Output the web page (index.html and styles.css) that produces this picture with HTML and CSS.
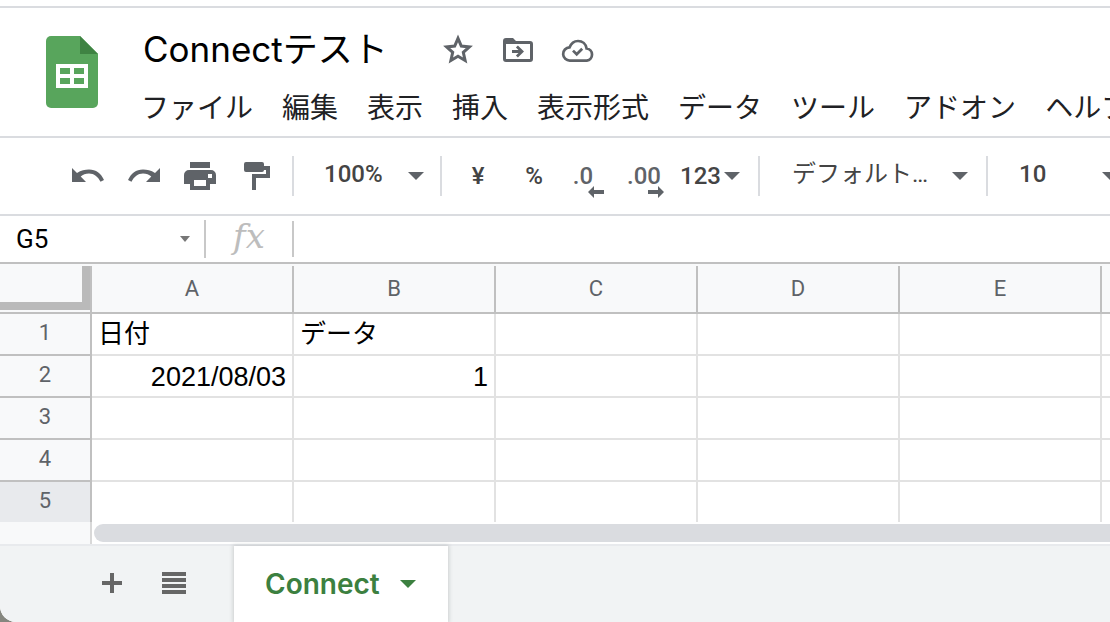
FILE: index.html
```html
<!DOCTYPE html>
<html lang="ja">
<head>
<meta charset="utf-8">
<meta name="viewport" content="width=device-width, initial-scale=1">
<title>Connectテスト</title>
<link rel="stylesheet" href="styles.css">
</head>
<body>
<div class="app">
  <header class="header">
    <svg class="logo" viewBox="0 0 52 72" aria-hidden="true">
      <path fill="#58a55c" d="M5 0h29l18 18v49a5 5 0 0 1-5 5H5a5 5 0 0 1-5-5V5a5 5 0 0 1 5-5z"/>
      <path fill="#3f8343" d="M34 0l18 18H34z"/>
      <path fill="#fff" fill-rule="evenodd" d="M10 28h32v24H10zM14 32v6h10v-6zM28 32v6h10v-6zM14 42v6h10v-6zM28 42v6h10v-6z"/>
    </svg>
    <div class="heading">
      <div class="title-row">
        <h1 class="title">Connectテスト</h1>
        <div class="title-actions">
          <button class="title-button" aria-label="スターを付ける">
            <svg width="36" height="36" viewBox="0 0 36 36"><path fill="none" stroke="#5f6368" stroke-width="3" d="M18 6.300l3.300 7.800 8.100.8-6.100 5.500 1.800 8.100-7.100-4.300-7.100 4.300 1.800-8.100-6.100-5.500 8.100-.8z"/></svg>
          </button>
          <button class="title-button" aria-label="移動">
            <svg width="36" height="36" viewBox="0 0 36 36"><path fill="#5f6368" fill-rule="evenodd" d="M6 6h7l3 3h14a3 3 0 0 1 3 3v15a3 3 0 0 1-3 3H6a3 3 0 0 1-3-3V9a3 3 0 0 1 3-3zM6 12v15h24V12z"/><path fill="#5f6368" d="M12 18h6.500l-2.600-2.600 2-2 6.100 6.100-6.100 6.100-2-2 2.600-2.600H12z"/></svg>
          </button>
          <button class="title-button" aria-label="保存状況">
            <svg width="36" height="36" viewBox="0 0 36 36" fill="none" stroke="#5f6368" stroke-width="2.700"><path d="M10 28.600a6.600 6.600 0 0 1-.5-13.200C11 11.700 14 9 18 9c4.500 0 7.800 3 8.600 7.500a6.100 6.100 0 0 1 .2 12.100z"/><path d="M13 18.600l3.700 3.700 5.500-5.500"/></svg>
          </button>
        </div>
      </div>
      <nav class="menubar">
        <button class="menu">ファイル</button>
        <button class="menu">編集</button>
        <button class="menu">表示</button>
        <button class="menu">挿入</button>
        <button class="menu">表示形式</button>
        <button class="menu">データ</button>
        <button class="menu">ツール</button>
        <button class="menu">アドオン</button>
        <button class="menu">ヘルプ</button>
      </nav>
    </div>
  </header>

  <div class="toolbar" role="toolbar">
    <div class="tool-group history">
      <button class="tool" aria-label="元に戻す">
        <svg width="32" height="32" viewBox="0 0 32 32"><path fill="#5f6368" d="M0 8l5 5C9 10 13 9.500 17 9.500c7 0 12 4 15 10.500l-3.500 1.800C26 16.500 22 13.400 17 13.400c-3.500 0-6 .8-8.300 3.200L14 22H0z"/></svg>
      </button>
      <button class="tool" aria-label="やり直し">
        <svg width="32" height="32" viewBox="0 0 32 32"><path fill="#5f6368" d="M32 8l-5 5C23 10 19 9.500 15 9.500 8 9.500 3 13.500 0 20l3.500 1.800C6 16.500 10 13.400 15 13.400c3.500 0 6 .8 8.300 3.200L18 22h14z"/></svg>
      </button>
      <button class="tool" aria-label="印刷">
        <svg width="32" height="32" viewBox="0 0 32 32"><path fill="#5f6368" fill-rule="evenodd" d="M6 2h20v6H6zM5 10h22a5 5 0 0 1 5 5v9h-6v6H6v-6H0v-9a5 5 0 0 1 5-5zM10 20v6h12v-6zM24 14v4h4v-4z"/></svg>
      </button>
      <button class="tool" aria-label="書式を貼り付け">
        <svg width="32" height="32" viewBox="0 0 32 32"><path fill="#5f6368" d="M6 2h16a2 2 0 0 1 2 2v2h6v12H16v12h-4V14h14v-4h-2a2 2 0 0 1-2 2H6a2 2 0 0 1-2-2V4a2 2 0 0 1 2-2z"/></svg>
      </button>
    </div>
    <div class="tool-group picker zoom">
      <select aria-label="ズーム"><option>100%</option></select>
      <span class="arrow"></span>
    </div>
    <div class="tool-group formats">
      <button class="tool">¥</button>
      <button class="tool">%</button>
      <button class="tool decimal">.0
        <svg class="shift" width="16" height="12" viewBox="0 0 16 12"><path fill="#5f6368" d="M6 0v4h10v4H6v4L0 6z"/></svg>
      </button>
      <button class="tool decimal">.00
        <svg class="shift" width="16" height="12" viewBox="0 0 16 12"><path fill="#5f6368" d="M10 0v4H0v4h10v4l6-6z"/></svg>
      </button>
      <button class="tool number">123<span class="arrow"></span></button>
    </div>
    <div class="tool-group picker font">
      <select aria-label="フォント"><option>デフォルト…</option></select>
      <span class="arrow"></span>
    </div>
    <div class="tool-group picker size">
      <select aria-label="フォントサイズ"><option>10</option></select>
      <span class="arrow"></span>
    </div>
  </div>

  <div class="formula-bar">
    <div class="name-box">
      <input class="name" type="text" value="G5" aria-label="名前ボックス">
      <span class="arrow small"></span>
    </div>
    <label class="fx" for="formula">fx</label>
    <input class="formula" id="formula" type="text">
  </div>

  <main class="grid">
    <table class="sheet">
      <colgroup><col class="col-head"><col><col><col><col><col><col></colgroup>
      <thead>
        <tr><th class="corner"><div class="corner-box"></div></th><th>A</th><th>B</th><th>C</th><th>D</th><th>E</th><th></th></tr>
      </thead>
      <tbody>
        <tr><th>1</th><td>日付</td><td>データ</td><td></td><td></td><td></td><td></td></tr>
        <tr><th>2</th><td class="num">2021/08/03</td><td class="num">1</td><td></td><td></td><td></td><td></td></tr>
        <tr><th>3</th><td></td><td></td><td></td><td></td><td></td><td></td></tr>
        <tr><th>4</th><td></td><td></td><td></td><td></td><td></td><td></td></tr>
        <tr class="current"><th>5</th><td></td><td></td><td></td><td></td><td></td><td></td></tr>
      </tbody>
    </table>
    <div class="scroll-row">
      <div class="scroll-head"></div>
      <div class="scroll-thumb"></div>
    </div>
  </main>

  <footer class="tabs">
    <button class="tab-tool" aria-label="シートを追加">
      <svg width="20" height="20" viewBox="0 0 20 20"><path fill="#666" d="M8 0h4v8h8v4h-8v8H8v-8H0V8h8z"/></svg>
    </button>
    <button class="tab-tool" aria-label="すべてのシート">
      <svg width="24" height="24" viewBox="0 0 24 24"><path fill="#666" d="M0 1h24v4H0zM0 7h24v4H0zM0 13h24v4H0zM0 19h24v4H0z"/></svg>
    </button>
    <button class="tab">Connect<span class="arrow green"></span></button>
  </footer>
</div>
</body>
</html>
```
FILE: styles.css
```css
* {
  box-sizing: border-box;
}

body {
  margin: 0;
  background: #85867f;
  font-family: Roboto, "Noto Sans CJK JP", sans-serif;
  overflow: hidden;
}

button,
input,
select {
  margin: 0;
  padding: 0;
  border: 0;
  background: none;
  font: inherit;
  color: inherit;
  appearance: none;
  outline: 0;
}

svg {
  display: block;
}

.app {
  display: flex;
  flex-direction: column;
  min-height: 100vh;
  padding-top: 6px;
  background: #fff;
  border-bottom-left-radius: 16px;
  overflow: hidden;
}

.header {
  display: flex;
  gap: 43px;
  height: 132px;
  padding: 12px 0 0 46px;
  border-top: 2px solid #dadce0;
  border-bottom: 2px solid #dadce0;
}

.logo {
  flex: none;
  width: 52px;
  height: 72px;
  margin-top: 16px;
}

.heading {
  flex: 1;
  min-width: 0;
}

.title-row {
  display: flex;
  align-items: center;
  gap: 52px;
  height: 60px;
}

.title {
  margin: 0 0 0 2px;
  padding-bottom: 2px;
  font: 400 35px/58px Inter, "Noto Sans CJK JP", sans-serif;
  color: #000;
  white-space: nowrap;
}

.title-actions {
  display: flex;
  gap: 24px;
}

.menubar {
  display: flex;
  gap: 29px;
  padding-top: 3px;
}

.menu {
  flex: none;
  font-size: 28px;
  line-height: 52px;
  color: #202124;
  white-space: nowrap;
}

.toolbar {
  display: flex;
  align-items: center;
  height: 78px;
  border-bottom: 2px solid #dadce0;
  font-size: 24px;
  font-weight: 500;
  color: #444;
  overflow: hidden;
}

.tool-group {
  display: flex;
  flex: none;
  align-items: center;
  height: 40px;
  border-right: 2px solid #dadce0;
}

.history {
  padding: 0 8px 0 60px;
}

.tool {
  display: flex;
  align-items: center;
  justify-content: center;
  width: 56px;
  height: 40px;
}

.formats {
  padding-left: 8px;
}

.decimal {
  position: relative;
  font-weight: 500;
  color: #5f6368;
  padding-right: 14px;
}

.decimal + .decimal {
  padding-right: 4px;
}

.shift {
  position: absolute;
  right: 14px;
  bottom: -2px;
}

.decimal + .decimal .shift {
  right: 10px;
}

.number {
  justify-content: flex-start;
  gap: 3px;
  width: 84px;
  padding-left: 6px;
}

.arrow {
  flex: none;
  border: 8px solid transparent;
  border-top-color: #5f6368;
  border-bottom: 0;
}

.arrow.small {
  border-width: 6px 5px 0;
  border-top-color: #777;
}

.arrow.green {
  border-top-color: #3c8040;
}

.picker select {
  flex: 1;
  min-width: 0;
  height: 36px;
  padding-bottom: 3px;
  line-height: 33px;
}

.zoom {
  width: 148px;
  padding: 0 16px 0 30px;
}

.font {
  width: 228px;
  padding: 0 18px 0 32px;
  font-weight: 400;
}

.size {
  width: 150px;
  padding: 0 18px 0 31px;
}

.formula-bar {
  display: flex;
  align-items: center;
  height: 48px;
  border-bottom: 2px solid #c0c0c0;
}

.name-box {
  display: flex;
  align-items: center;
  width: 206px;
  height: 38px;
  padding: 0 14px 0 16px;
  border-right: 2px solid #c8c8c8;
}

.name {
  flex: 1;
  min-width: 0;
  font-size: 26px;
  color: #000;
}

.fx {
  width: 88px;
  height: 36px;
  border-right: 2px solid #c8c8c8;
  font: italic 34px/30px "DejaVu Serif", serif;
  color: #bdbdbd;
  text-align: center;
}

.formula {
  flex: 1;
  min-width: 0;
  padding: 0 8px;
  font-size: 26px;
}

.grid {
  padding-top: 2px;
  background: #f8f9fa;
  overflow: hidden;
}

.sheet {
  width: 1304px;
  table-layout: fixed;
  border-collapse: separate;
  border-spacing: 0;
}

.col-head {
  width: 92px;
}

.sheet th,
.sheet td {
  height: 42px;
  padding: 0;
  border-right: 2px solid #e2e2e2;
  border-bottom: 2px solid #e2e2e2;
}

.sheet th {
  border-color: #c0c0c0;
  background: #f8f9fa;
  font-size: 22px;
  font-weight: 400;
  line-height: 36px;
  color: #5f6368;
}

.sheet tbody th {
  padding-bottom: 2px;
}

.sheet thead th {
  height: 48px;
}

.sheet td {
  padding: 0 6px;
  background: #fff;
  font-family: "Liberation Sans", "Noto Sans CJK JP", sans-serif;
  font-size: 26px;
  line-height: 38px;
  color: #000;
}

.sheet .num {
  padding-top: 2px;
  text-align: right;
  font-size: 27px;
}

.sheet .corner {
  vertical-align: top;
}

.corner-box {
  height: 44px;
  border: solid #bababa;
  border-width: 0 8px 8px 0;
}

.sheet .current th,
.sheet .current td {
  height: 40px;
  border-bottom: 0;
}

.sheet .current th {
  background: #e8eaed;
}

.scroll-row {
  display: flex;
  height: 22px;
  background: #fff;
}

.scroll-head {
  width: 92px;
  border-right: 2px solid #d8d8d8;
  background: #f8f9fa;
}

.scroll-thumb {
  flex: 1;
  margin: 2px 0 2px 2px;
  border-radius: 9px 0 0 9px;
  background: #dadce0;
}

.tabs {
  display: flex;
  flex: 1;
  min-height: 78px;
  padding-left: 84px;
  border-top: 2px solid #e8eaed;
  background: #f1f3f4;
}

.tab-tool {
  display: flex;
  align-items: center;
  justify-content: center;
  width: 56px;
  height: 74px;
}

.tab-tool + .tab-tool {
  margin: 0 32px 0 6px;
}

.tab {
  display: flex;
  align-items: center;
  gap: 20px;
  padding: 0 32px 0 31px;
  background: #fff;
  box-shadow: 0 0 4px 1px rgba(60, 64, 67, 0.2);
  font: 600 28px/36px Inter, sans-serif;
  color: #3c8040;
}
```
